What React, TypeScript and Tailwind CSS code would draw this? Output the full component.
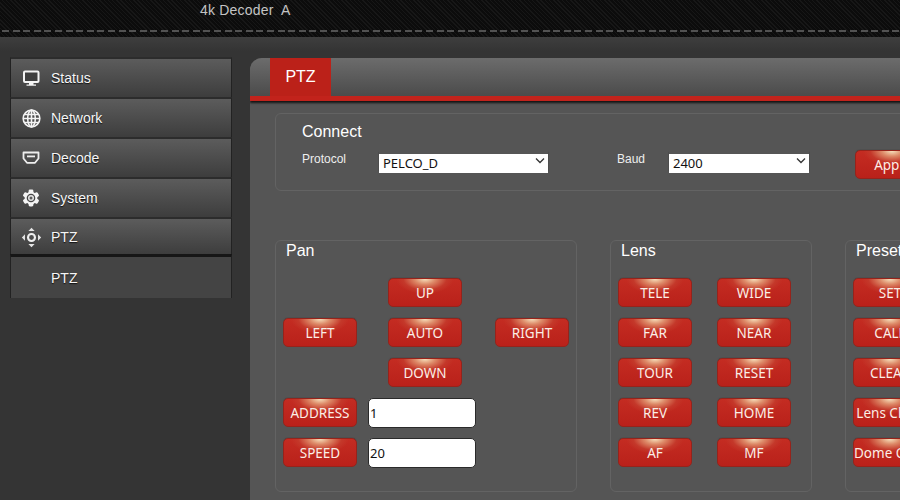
import React from "react";

const btn =
  "h-[29px] w-[74px] shrink-0 overflow-hidden whitespace-nowrap rounded-[5px] border border-[#96231b] bg-[radial-gradient(ellipse_40%_55%_at_50%_0%,#f6e0bc_0%,#dd8a68_35%,#c4382a_75%,transparent_100%),linear-gradient(#c42c22,#b9211a)] text-center text-[13.5px] leading-[29px] text-[#fbeee6] [font-family:'Noto_Sans',sans-serif] shadow-[0_-1px_1px_-1px_#222]";

const fieldset = "shrink-0 rounded-[6px] border border-[#636363]";
const title = "text-[16px] leading-[20px] text-white";

function Monitor() {
  return (
    <svg width="18" height="18" viewBox="0 0 18 18" fill="none">
      <rect x="2" y="2.500" width="14.500" height="10.500" rx="1" stroke="#f4f4f4" strokeWidth="2" fill="#3f3f3f" />
      <path d="M7 14h4.500v1.500H14v1.300H4.500v-1.300H7z" fill="#f4f4f4" />
    </svg>
  );
}

function Globe() {
  return (
    <svg width="19" height="19" viewBox="0 0 18 18" fill="none" stroke="#f4f4f4" strokeWidth="1.500">
      <circle cx="9" cy="9" r="7.900" />
      <ellipse cx="9" cy="9" rx="3.600" ry="7.900" />
      <path d="M9 1.100v15.800M1.100 9h15.800M2.300 5.200h13.400M2.300 12.800h13.400" />
    </svg>
  );
}

function Hdmi() {
  return (
    <svg width="18" height="14" viewBox="0 0 18 14" fill="none">
      <path d="M1.500 1.500h15v6L13 11.800H5L1.500 7.500z" stroke="#eeeeee" strokeWidth="1.800" strokeLinejoin="round" />
      <rect x="5" y="4.500" width="8" height="1.800" fill="#eeeeee" />
    </svg>
  );
}

function Gear() {
  const teeth = [0, 60, 120, 180, 240, 300];
  return (
    <svg width="18" height="18" viewBox="0 0 18 18" fill="none">
      <circle cx="9" cy="9" r="6.300" fill="#f4f4f4" />
      {teeth.map((a) => (
        <rect key={a} x="6.600" y="0.600" width="4.800" height="4" rx="1.400" fill="#f4f4f4" transform={`rotate(${a} 9 9)`} />
      ))}
      <circle cx="9" cy="9" r="4.300" fill="#474747" />
      <circle cx="9" cy="9" r="3" fill="#e4e4e4" />
      <circle cx="9" cy="9" r="1.500" fill="#5a5a5a" />
    </svg>
  );
}

function Ptz() {
  return (
    <svg width="21" height="21" viewBox="0 0 20 20" fill="none">
      <circle cx="10" cy="10" r="3.300" stroke="#f0f0f0" strokeWidth="2" />
      <path d="M10 .8l3 3H7zM10 19.200l3-3H7zM.8 10l3-3v6zM19.200 10l-3-3v6z" fill="#e4e4e4" />
    </svg>
  );
}

const items: [string, React.ReactNode][] = [
  ["Status", <Monitor />],
  ["Network", <Globe />],
  ["Decode", <Hdmi />],
  ["System", <Gear />],
];

function NavItem({ label, icon, box }: { label: string; icon: React.ReactNode; box: string }) {
  return (
    <div
      className={`${box} flex items-center border-x border-t-2 border-x-[#222] border-t-[#2c2c2c] bg-[linear-gradient(#5c5c5c,#3d3d3d)] [text-shadow:0_1px_1px_#111]`}
    >
      <div className="flex w-[40px] shrink-0 justify-center">{icon}</div>
      <span className="text-[14px] text-[#f6f6f6]">{label}</span>
    </div>
  );
}

function Btn({ children }: { children: React.ReactNode }) {
  return <div className={`${btn} leading-[27px]`}>{children}</div>;
}

function Select({ value, width }: { value: string; width: string }) {
  return (
    <div className={`${width} relative h-[19px] shrink-0 shadow-[0_1px_1px_#2a2a2a]`}>
      <select
        defaultValue={value}
        className="h-[19px] w-full appearance-none bg-white pl-[4px] text-[13px] leading-[19px] text-[#111] [font-family:'Noto_Sans',sans-serif]"
      >
        <option>{value}</option>
      </select>
      <svg className="absolute right-[3px] top-[6px]" width="10" height="7" viewBox="0 0 10 7" fill="none" stroke="#333333" strokeWidth="1.300">
        <path d="M1 1.500l4 4 4-4" />
      </svg>
    </div>
  );
}

function Field({ value }: { value: string }) {
  return (
    <input
      readOnly
      defaultValue={value}
      className="h-[30px] w-[108px] rounded-[5px] border border-[#2a2a2a] bg-white pl-[1px] text-[13px] text-[#111] [font-family:'Noto_Sans',sans-serif]"
    />
  );
}

export default function App() {
  return (
    <div className="flex h-[500px] w-[900px] flex-col overflow-hidden bg-[#343434] [font-family:'Liberation_Sans',Arial,sans-serif]">
      <header className="h-[37px] shrink-0 bg-[repeating-linear-gradient(45deg,#171717_0px,#171717_1px,#0c0c0c_1px,#0c0c0c_3px)]">
        <div className="whitespace-pre pl-[200px] text-[14px] leading-[21px] tracking-[0.2px] text-[#c4c4c4]">4k Decoder  A</div>
        <div className="ml-[2px] mt-[9px] h-[2px] bg-[repeating-linear-gradient(90deg,#525252_0px,#525252_7px,transparent_7px,transparent_10.600px)]" />
      </header>

      <div className="flex min-h-0 flex-1 items-start gap-[18px] bg-[linear-gradient(#3e3e3e,#343434_14px)] pl-[10px] pt-[21px]">
        <aside className="-mt-[1px] w-[222px] shrink-0">
          {items.map(([label, icon]) => (
            <NavItem key={label} label={label} icon={icon} box="h-[40px]" />
          ))}
          <NavItem label="PTZ" icon={<Ptz />} box="h-[37px] pt-[2px]" />
          <div className="flex h-[44px] items-center border-x border-t-[3px] border-x-[#222] border-t-[#161616] bg-[#444444] pl-[40px] pt-[1px] text-[14px] text-[#f6f6f6] [text-shadow:0_1px_1px_#111]">
            PTZ
          </div>
        </aside>

        <main className="h-[442px] w-[760px] shrink-0 overflow-hidden rounded-tl-[12px] bg-[#555555]">
          <div className="h-[43px] border-b-[5px] border-[#c2231c] bg-[linear-gradient(#6c6c6c,#4b4b4b)] pl-[20px] shadow-[0_2px_2px_#151515]">
            <div className="h-[38px] w-[61px] bg-[#bb2119] text-center text-[16px] leading-[38px] text-white">PTZ</div>
          </div>

          <section className={`${fieldset} ml-[25px] mt-[12px] h-[78px] w-[700px] pl-[26px] pt-[8px]`}>
            <div className={title}>Connect</div>
            <div className="mt-[9px] flex items-start">
              <span className="w-[77px] shrink-0 text-[12px] leading-[16px] text-[#eeeeee]">Protocol</span>
              <Select value="PELCO_D" width="w-[169px]" />
              <span className="ml-[69px] w-[52px] shrink-0 text-[12px] leading-[16px] text-[#eeeeee]">Baud</span>
              <Select value="2400" width="w-[140px]" />
              <div className={`${btn} ml-[46px] -mt-[1px] leading-[27px]`}>Apply</div>
            </div>
          </section>

          <div className="ml-[25px] mt-[49px] flex items-start">
            <section className={`${fieldset} h-[252px] w-[302px] px-[7px]`}>
              <div className={`${title} pl-[3px]`}>Pan</div>
              <div className="mt-[17px] grid auto-rows-[29px] grid-cols-[105px_107px_74px] gap-y-[11px]">
                <div />
                <Btn>UP</Btn>
                <div />
                <Btn>LEFT</Btn>
                <Btn>AUTO</Btn>
                <Btn>RIGHT</Btn>
                <div />
                <Btn>DOWN</Btn>
                <div />
                <div className="col-span-3 flex items-center gap-[11px]">
                  <Btn>ADDRESS</Btn>
                  <Field value="1" />
                </div>
                <div className="col-span-3 flex items-center gap-[11px]">
                  <Btn>SPEED</Btn>
                  <Field value="20" />
                </div>
              </div>
            </section>

            <section className={`${fieldset} ml-[33px] h-[252px] w-[202px] px-[7px]`}>
              <div className={`${title} pl-[3px]`}>Lens</div>
              <div className="mt-[17px] grid grid-cols-[74px_74px] gap-x-[25px] gap-y-[11px]">
                {["TELE", "WIDE", "FAR", "NEAR", "TOUR", "RESET", "REV", "HOME", "AF", "MF"].map((t) => (
                  <Btn key={t}>{t}</Btn>
                ))}
              </div>
            </section>

            <section className={`${fieldset} ml-[33px] h-[252px] w-[200px] px-[7px]`}>
              <div className={`${title} pl-[3px]`}>Preset</div>
              <div className="mt-[17px] flex flex-col gap-[11px]">
                {["SET", "CALL", "CLEAR", "Lens Close", "Dome Open"].map((t) => (
                  <Btn key={t}>{t}</Btn>
                ))}
              </div>
            </section>
          </div>
        </main>
      </div>
    </div>
  );
}
